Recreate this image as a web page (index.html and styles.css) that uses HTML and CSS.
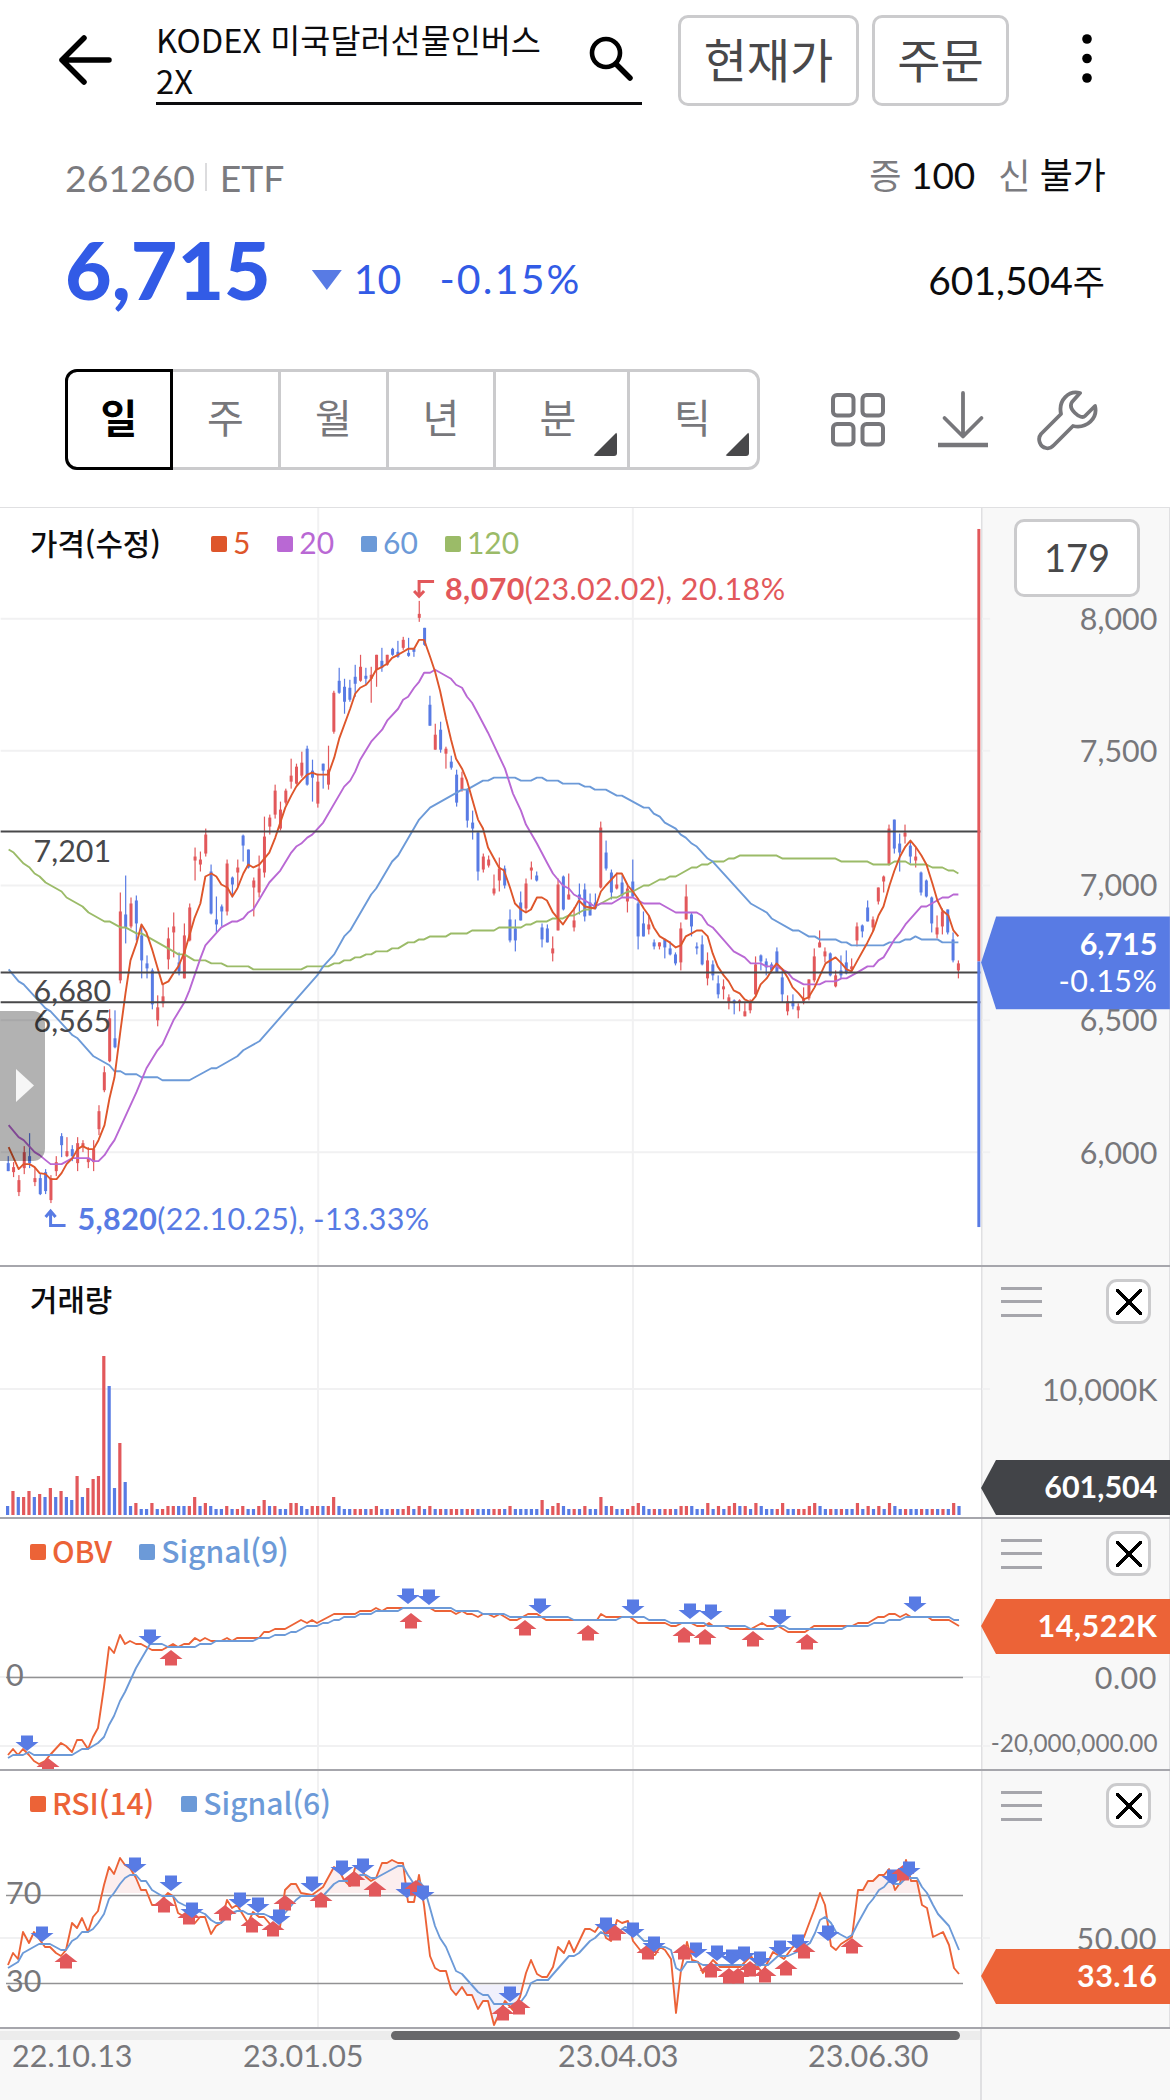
FILE: index.html
```
<!DOCTYPE html>
<html lang="ko">
<head>
    <meta charset="UTF-8">
    <meta name="viewport" content="width=device-width, initial-scale=1.0">
    <title>KODEX 미국달러선물인버스2X</title>
    <link rel="stylesheet" href="styles.css">
</head>
<body>
    <header class="top-bar">
        <svg class="back-icon" width="54" height="54" viewBox="0 0 54 54">
            <path d="M51 27H4M26 5L4 27l22 22" fill="none" stroke="#000" stroke-width="5.5" stroke-linecap="round" stroke-linejoin="round"/>
        </svg>
        <div class="search-box">
            <span class="search-text">KODEX 미국달러선물인버스<br>2X</span>
            <svg class="search-icon" width="48" height="48" viewBox="0 0 48 48">
                <circle cx="19" cy="18" r="14" fill="none" stroke="#000" stroke-width="4.6"/>
                <path d="M29 29L43 43" stroke="#000" stroke-width="5.5" stroke-linecap="round"/>
            </svg>
        </div>
        <button class="top-btn wide">현재가</button>
        <button class="top-btn">주문</button>
        <svg class="more-icon" width="12" height="52" viewBox="0 0 12 52">
            <circle cx="6" cy="6" r="4.8"/>
            <circle cx="6" cy="25.5" r="4.8"/>
            <circle cx="6" cy="45" r="4.8"/>
        </svg>
    </header>

    <section class="info-row">
        <span class="code">261260</span>
        <span class="divider"></span>
        <span class="code">ETF</span>
        <span class="margin-info"><em>증</em> 100</span>
        <span class="margin-info second"><em>신</em> 불가</span>
    </section>

    <section class="price-row">
        <strong class="price">6,715</strong>
        <span class="down-mark"></span>
        <span class="diff">10</span>
        <span class="rate">-0.15%</span>
        <span class="shares">601,504<em>주</em></span>
    </section>

    <section class="period-row">
        <ul class="tabs">
            <li class="active">일</li>
            <li>주</li>
            <li>월</li>
            <li class="year">년</li>
            <li class="more">분</li>
            <li class="more">틱</li>
        </ul>
        <div class="tools">
            <svg width="56" height="56" viewBox="0 0 56 56">
                <g fill="none" stroke="#77777b" stroke-width="4">
                    <rect x="3" y="3" width="20.5" height="20.5" rx="4"/>
                    <rect x="32.5" y="3" width="20.5" height="20.5" rx="4"/>
                    <rect x="3" y="32" width="20.5" height="20.5" rx="4"/>
                    <rect x="32.5" y="32" width="20.5" height="20.5" rx="4"/>
                </g>
            </svg>
            <svg width="52" height="58" viewBox="0 0 52 58">
                <path d="M26 2V45M7.500 27L26 45.500L44.500 27" fill="none" stroke="#77777b" stroke-width="3.800" stroke-linecap="round" stroke-linejoin="round"/>
                <path d="M1 54H51" stroke="#77777b" stroke-width="4.500"/>
            </svg>
            <svg width="62" height="62" viewBox="0 0 62 62">
                <path d="M43 4C32 1 21 11 24 25L4 45C0 50 3 58 9 59C12 60 14 59 17 56L36 37C50 40 61 29 58 17L48 27C46 29 42 28 38 24C34 20 33 16 35 13Z" fill="none" stroke="#77777b" stroke-width="3.800" stroke-linejoin="round"/>
            </svg>
        </div>
    </section>

    <main class="chart">
        <section class="panel price-panel">
            <svg class="plot" viewBox="0 507 981 758">
                <path class="grid" d="M318 507V1265M633 507V1265M0 618H981M0 750H981M0 885H981M0 1020H981M0 1152H981"/>
                <g id="candles"></g>
                <polyline class="line ma120" points="8,849 13,852 23,863 29,867 34,873 39,876 45,882 61,891 66,897 82,906 88,912 104,921 109,921 120,927 125,927 136,933 141,933 173,951 178,954 184,954 194,960 205,960 211,963 221,963 227,966 248,966 253,969 301,969 307,966 328,966 334,963 339,963 344,960 350,960 355,957 360,957 366,954 371,954 376,951 387,951 392,948 398,948 408,942 414,942 419,939 424,939 430,936 446,936 451,933 467,933 472,930 494,930 499,927 521,927 526,924 531,924 537,921 547,921 553,918 563,918 569,915 574,915 585,909 590,909 612,897 617,897 628,891 633,891 644,885 649,885 660,879 665,879 670,876 676,876 692,867 697,867 702,864 708,864 713,861 724,861 729,858 734,858 740,855 777,855 783,858 836,858 842,861 868,861 874,864 890,864 895,861 906,861 911,864 927,864 933,867 943,867 949,870 954,870 959,873"/>
                <polyline class="line ma60" points="8,969 18,981 23,984 45,1008 50,1011 72,1035 77,1038 93,1056 109,1065 114,1071 120,1071 125,1074 136,1074 141,1077 157,1077 162,1080 189,1080 211,1068 216,1068 237,1056 243,1050 259,1041 317,975 323,966 334,954 344,936 350,930 371,894 376,888 392,861 398,855 419,819 430,807 462,789 467,789 483,780 488,780 494,777 515,777 521,780 531,780 537,777 542,777 547,780 558,780 563,783 579,783 585,786 590,786 595,789 606,789 617,795 622,795 644,807 649,807 654,813 660,816 665,822 676,828 681,834 686,837 692,843 697,846 708,858 713,861 751,903 767,912 772,918 793,930 799,930 809,936 815,936 820,939 836,939 842,942 847,942 852,945 884,945 890,942 900,942 906,939 911,939 916,936 922,939 938,939 943,942 959,942"/>
                <polyline class="line ma20" points="8,1125 18,1137 23,1140 34,1152 39,1155 45,1160 50,1164 61,1164 72,1158 88,1158 93,1161 98,1161 104,1155 109,1147 114,1140 125,1116 136,1092 146,1068 157,1050 162,1044 173,1020 184,1002 189,990 200,958 205,945 221,927 232,921 237,921 243,918 248,912 253,909 269,882 280,870 291,852 296,846 301,843 307,837 312,834 323,822 344,786 350,780 355,771 360,759 371,741 382,729 387,720 398,708 403,699 408,696 414,687 419,681 424,672 430,672 435,669 451,678 456,684 462,687 467,696 472,702 478,713 488,732 505,768 513,793 521,810 526,824 537,843 547,862 553,873 563,885 569,888 574,894 585,900 595,906 601,903 612,903 622,897 633,897 644,903 660,903 676,912 697,912 702,915 708,924 713,927 734,951 745,957 751,963 761,963 767,966 777,966 788,972 793,978 804,984 820,984 826,981 836,981 842,978 847,978 858,972 868,966 874,966 879,960 884,957 895,939 900,933 906,924 922,906 927,906 943,897 949,897 954,894 959,894"/>
                <polyline class="line ma5" points="8,1147 18,1169 23,1164 29,1164 34,1167 39,1173 45,1174 50,1179 56,1179 61,1173 66,1164 72,1158 77,1149 82,1146 88,1149 93,1149 98,1140 104,1125 109,1098 114,1077 120,1030 125,993 130,960 136,943 141,924 146,932 152,950 157,967 162,984 168,981 173,973 178,966 184,952 189,935 194,918 200,903 205,876 211,873 216,876 221,884 227,887 232,896 237,888 243,873 248,864 253,867 259,864 264,858 269,852 275,837 280,822 285,807 291,795 296,786 301,780 307,774 312,772 317,774 328,774 334,757 339,738 350,708 355,693 360,687 366,684 371,678 376,669 382,666 387,663 392,657 398,654 408,648 414,648 419,639 424,639 430,656 435,671 440,690 446,718 451,739 456,758 462,768 467,780 472,798 478,819 483,828 488,847 494,858 499,867 504,870 510,887 515,903 521,909 526,912 531,909 537,897 542,897 547,900 553,912 558,918 563,924 569,915 574,909 579,900 585,906 595,908 601,891 606,885 617,873 622,873 628,885 633,891 638,898 644,908 649,915 654,927 660,936 670,942 676,947 681,945 686,936 692,933 697,930 702,930 708,936 713,953 718,966 724,975 729,981 734,990 740,993 745,999 751,1002 756,996 761,984 767,978 772,970 777,963 783,969 788,977 793,987 799,993 804,999 809,997 815,987 826,963 831,960 836,957 842,963 847,969 852,971 858,960 868,942 874,930 879,915 884,906 890,885 895,870 900,857 906,846 911,840 916,846 922,855 927,864 933,883 938,900 943,910 949,915 954,930 959,936"/>
                <path class="level" d="M0 831H981M0 972H981M0 1002H981"/>
                <text class="level-label" x="33" y="861">7,201</text>
                <text class="level-label" x="33" y="1002">6,680</text>
                <text class="level-label" x="33" y="1032">6,565</text>
                <path class="peak-arrow" d="M434 580.500H419V595M414 590L419 595.500L424 590"/>
                <text class="peak" x="445" y="599"><tspan class="bold">8,070</tspan>(23.02.02), 20.18%</text>
                <path class="low-arrow" d="M65 1225.500H50V1211M45 1217L50 1211L55 1217"/>
                <text class="low" x="77" y="1230"><tspan class="bold">5,820</tspan>(22.10.25), -13.33%</text>
                <rect x="978" y="528" width="3" height="433" fill="#e2585b"/>
                <rect x="978" y="961" width="3" height="266" fill="#587be4"/>
            </svg>
            <svg class="axis" viewBox="981 507 189 758">
                <path class="grid" d="M982 618H990M982 750H990M982 885H990M982 1020H990M982 1152H990"/>
                <text x="1157.500" y="629">8,000</text>
                <text x="1157.500" y="761">7,500</text>
                <text x="1157.500" y="896">7,000</text>
                <text x="1157.500" y="1031">6,500</text>
                <text x="1157.500" y="1164">6,000</text>
                <path d="M981 962L996 916H1170V1009H996Z" fill="#587be4"/>
                <text class="tag bold" x="1157.500" y="955">6,715</text>
                <text class="tag wide" x="1157.500" y="992">-0.15%</text>
            </svg>
            <div class="legend">
                <b>가격(수정)</b>
                <span class="key ma5">5</span>
                <span class="key ma20">20</span>
                <span class="key ma60">60</span>
                <span class="key ma120">120</span>
            </div>
            <span class="count">179</span>
            <span class="drawer"></span>
        </section>

        <section class="panel">
            <svg class="plot" viewBox="0 1267 981 250">
                <path class="grid" d="M318 1267V1517M633 1267V1517M0 1389H981"/>
                <g id="volume"></g>
            </svg>
            <svg class="axis" viewBox="981 1267 189 250">
                <path class="grid" d="M982 1389H990"/>
                <text x="1157.500" y="1401">10,000K</text>
                <path d="M981 1488L996 1460H1170V1515H996Z" fill="#424448"/>
                <text class="tag bold" x="1157.500" y="1498">601,504</text>
            </svg>
            <div class="legend"><b>거래량</b></div>
            <div class="controls"><i class="menu"></i><i class="close"></i></div>
        </section>

        <section class="panel">
            <svg class="plot" viewBox="0 1519 981 250">
                <path class="grid" d="M318 1519V1769M633 1519V1769M0 1677H981M0 1746H981"/>
                <path class="base" d="M6 1677.500H963"/>
                <text class="base-label" x="6" y="1686">0</text>
                <polyline class="line osc" points="8,1755 13,1749 18,1755 23,1749 29,1755 34,1761 39,1764 45,1761 50,1755 61,1743 66,1746 72,1752 77,1740 82,1740 88,1749 93,1737 98,1728 104,1687 109,1647 114,1653 120,1635 125,1644 130,1641 136,1644 141,1644 152,1650 162,1650 173,1644 178,1647 184,1644 189,1644 195,1638 200,1641 205,1638 211,1641 221,1641 227,1638 232,1641 237,1638 259,1638 264,1632 269,1632 275,1629 285,1629 301,1620 307,1623 312,1620 317,1623 334,1614 355,1614 360,1611 371,1611 376,1608 382,1611 387,1608 430,1608 435,1611 451,1611 456,1614 462,1611 467,1614 472,1614 478,1617 483,1614 488,1614 494,1617 500,1614 510,1620 517,1620 528,1614 537,1614 546,1620 597,1620 601,1614 606,1617 630,1617 638,1623 665,1623 671,1626 676,1626 682,1623 691,1623 697,1626 704,1626 709,1623 713,1626 724,1626 730,1629 751,1629 762,1623 767,1626 778,1626 788,1632 805,1632 814,1626 852,1626 858,1623 868,1623 878,1617 884,1617 889,1614 895,1614 900,1617 906,1614 911,1617 928,1617 932,1620 949,1620 959,1626"/>
                <polyline class="line signal" points="8,1758 13,1755 23,1755 29,1752 34,1755 72,1755 82,1749 88,1749 98,1743 104,1737 109,1725 114,1716 120,1701 125,1692 136,1668 150,1644 162,1644 168,1647 195,1647 200,1644 211,1644 216,1641 253,1641 259,1638 269,1638 275,1635 285,1635 291,1632 296,1632 307,1626 317,1626 323,1623 328,1623 334,1620 339,1620 344,1617 355,1617 360,1614 371,1614 376,1611 398,1611 403,1608 451,1608 456,1611 478,1611 483,1614 504,1614 510,1617 568,1617 574,1620 616,1620 622,1617 644,1617 649,1620 665,1620 671,1623 704,1623 708,1626 745,1626 751,1629 773,1629 778,1626 784,1626 789,1629 842,1629 847,1626 868,1626 874,1623 884,1623 889,1620 900,1620 906,1617 949,1617 954,1620 959,1620"/>
                <g id="obvMarks"></g>
            </svg>
            <svg class="axis" viewBox="981 1519 189 250">
                <path class="grid" d="M982 1677H990M982 1746H990"/>
                <text class="wide" x="1157" y="1689">0.00</text>
                <text class="small" x="1157.500" y="1752">-20,000,000.00</text>
                <path d="M981 1626L996 1599H1170V1654H996Z" fill="#ec6337"/>
                <text class="tag bold wide" x="1157.500" y="1637">14,522K</text>
            </svg>
            <div class="legend indicator">
                <span class="key osc">OBV</span>
                <span class="key signal">Signal(9)</span>
            </div>
            <div class="controls"><i class="menu"></i><i class="close"></i></div>
        </section>

        <section class="panel rsi-panel">
            <svg class="plot" viewBox="0 1771 981 256">
                <defs>
                    <clipPath id="over"><rect x="0" y="1771" width="980" height="122"/></clipPath>
                    <clipPath id="under"><rect x="0" y="1985" width="980" height="42"/></clipPath>
                </defs>
                <path class="grid" d="M318 1771V2027M633 1771V2027M0 1938H981"/>
                <path id="overArea" clip-path="url(#over)" fill="#fceeee"/>
                <path id="underArea" clip-path="url(#under)" fill="#f0f0fc"/>
                <path class="base" d="M6 1895.500H963M6 1983.500H963"/>
                <text class="base-label" x="6" y="1904">70</text>
                <text class="base-label" x="6" y="1992">30</text>
                <polyline id="rsiLine" class="line osc" points="8,1965 13,1953 18,1959 23,1932 29,1943 34,1932 45,1947 50,1947 56,1953 61,1956 66,1950 72,1923 77,1928 82,1918 88,1932 93,1917 98,1911 104,1885 109,1867 114,1874 120,1858 125,1865 130,1868 136,1878 141,1890 146,1890 152,1905 157,1905 168,1893 173,1896 178,1913 195,1923 200,1917 205,1917 211,1934 216,1926 221,1923 227,1900 232,1908 237,1905 248,1923 253,1912 259,1917 264,1917 275,1930 280,1927 285,1890 291,1884 296,1884 301,1893 312,1895 323,1887 334,1867 339,1870 344,1880 350,1886 355,1868 360,1867 366,1877 371,1881 376,1878 382,1863 387,1863 392,1860 398,1863 403,1863 408,1902 414,1902 419,1875 424,1905 430,1956 435,1968 440,1971 446,1971 451,1989 456,1995 462,1987 467,1995 472,1995 478,2009 483,2001 488,2001 494,2025 499,2014 505,2001 513,2010 520,1997 526,1973 531,1960 537,1974 542,1977 547,1977 553,1967 558,1947 564,1953 569,1941 574,1952 585,1929 590,1929 595,1932 601,1923 606,1938 611,1941 617,1920 622,1923 628,1921 633,1941 644,1955 655,1955 660,1947 665,1950 671,1959 676,2013 681,1970 687,1942 692,1960 698,1962 703,1973 713,1960 720,1967 740,1967 751,1956 762,1973 773,1952 784,1959 792,1948 804,1937 810,1921 815,1908 820,1893 825,1905 831,1946 836,1950 841,1944 852,1937 858,1890 863,1890 868,1881 873,1881 879,1875 884,1875 889,1869 895,1890 900,1883 906,1860 911,1881 917,1881 922,1905 927,1908 933,1937 943,1932 949,1945 954,1968 959,1974"/>
                <polyline class="line signal" points="8,1968 18,1962 23,1953 39,1944 50,1944 61,1950 66,1950 72,1941 77,1938 82,1932 88,1932 93,1929 98,1923 104,1914 109,1899 114,1893 120,1884 125,1878 130,1875 136,1875 141,1881 146,1881 152,1890 162,1896 173,1896 178,1902 184,1905 205,1914 211,1920 216,1923 221,1923 232,1913 237,1911 243,1911 248,1914 264,1914 275,1919 285,1913 296,1900 301,1896 323,1896 334,1884 339,1881 350,1881 360,1875 366,1875 371,1878 376,1878 398,1866 403,1866 408,1875 414,1884 419,1881 424,1887 430,1908 435,1926 440,1938 446,1947 456,1971 462,1974 478,1992 483,1995 488,1995 494,2004 511,2004 520,2003 526,1995 531,1983 537,1980 548,1980 569,1956 574,1956 579,1953 590,1941 595,1938 601,1932 606,1935 611,1937 625,1927 633,1930 644,1941 649,1941 655,1947 665,1947 671,1950 676,1968 681,1971 687,1962 697,1962 703,1965 768,1965 778,1956 788,1956 797,1952 810,1943 815,1933 820,1920 825,1917 831,1923 836,1932 847,1938 852,1935 858,1923 868,1905 873,1899 879,1890 884,1887 889,1881 895,1884 900,1884 906,1878 917,1878 922,1887 927,1893 933,1905 938,1914 949,1926 959,1950"/>
                <g id="rsiMarks"></g>
            </svg>
            <svg class="axis" viewBox="981 1771 189 256">
                <path class="grid" d="M982 1938H990"/>
                <text class="wide" x="1157" y="1950">50.00</text>
                <path d="M981 1976L996 1949H1170V2004H996Z" fill="#ec6337"/>
                <text class="tag bold wide" x="1157.500" y="1987">33.16</text>
            </svg>
            <div class="legend indicator">
                <span class="key osc">RSI(14)</span>
                <span class="key signal">Signal(6)</span>
            </div>
            <div class="controls"><i class="menu"></i><i class="close"></i></div>
        </section>

        <footer class="dates">
            <div class="scroll-track"><div class="scroll-thumb"></div></div>
            <div class="date-list">
                <span>22.10.13</span>
                <span>23.01.05</span>
                <span>23.04.03</span>
                <span>23.06.30</span>
            </div>
        </footer>
    </main>

    <script src="chart.js"></script>
</body>
</html>
```
FILE: styles.css
```
* {
    margin: 0;
    padding: 0;
    box-sizing: border-box;
}

body {
    width: 1170px;
    height: 2100px;
    overflow: hidden;
    background-color: #fff;
    color: #0c0c0e;
    font-family: Lato, 'Noto Sans CJK KR', sans-serif;
}

em, i {
    font-style: normal;
}

/* 상단 */
.top-bar {
    display: flex;
    align-items: flex-start;
    height: 120px;
    padding: 15px 0 0 58px;
}

.back-icon {
    margin-top: 18px;
}

.search-box {
    display: flex;
    justify-content: space-between;
    width: 486px;
    height: 90px;
    margin-left: 44px;
    padding-top: 3px;
    border-bottom: 3px solid #0c0c0e;
}

.search-text {
    font-family: 'Noto Sans CJK KR', sans-serif;
    font-size: 32.7px;
    line-height: 41px;
    white-space: nowrap;
}

.search-icon {
    margin: 17px 7px 0 0;
}

.top-btn {
    width: 137px;
    height: 91px;
    margin-left: 13px;
    padding-bottom: 5px;
    border: 3px solid #cbcbcd;
    border-radius: 10px;
    background-color: #fff;
    color: #48484a;
    font-family: 'Noto Sans CJK KR', sans-serif;
    font-size: 47px;
    line-height: 78px;
}

.top-btn.wide {
    width: 181px;
    margin-left: 36px;
}

.more-icon {
    margin: 18px 0 0 72px;
}

/* 종목 정보 */
.info-row {
    display: flex;
    align-items: center;
    height: 110px;
    padding: 0 64px 0 65px;
    font-size: 37.3px;
}

.code {
    padding-top: 4px;
    color: #7b7b7f;
}

.divider {
    width: 2px;
    height: 28px;
    margin: 4px 13px 0 10px;
    background-color: #dcdcde;
}

.margin-info {
    margin-left: auto;
    padding-bottom: 4px;
    font-size: 37px;
}

.margin-info em {
    color: #7b7b7f;
    font-size: 35px;
}

.margin-info.second {
    margin-left: 23px;
    font-size: 36px;
}

.price-row {
    display: flex;
    align-items: flex-start;
    height: 139px;
    padding: 0 65px 0 65px;
    color: #325be6;
    font-size: 41px;
    line-height: 98px;
}

.price {
    font-size: 80.5px;
    font-weight: 900;
    line-height: 78px;
}

.down-mark {
    width: 30px;
    height: 20px;
    margin: 40px 12px 0 41px;
    background-color: #587be4;
    clip-path: polygon(0 0, 100% 0, 50% 100%);
}

.rate {
    margin-left: 38px;
    letter-spacing: 2.2px;
}

.shares {
    margin-left: auto;
    color: #0c0c0e;
    font-size: 39px;
    line-height: 101px;
}

.shares em {
    font-size: 35px;
}

/* 주기 탭 */
.period-row {
    display: flex;
    height: 138px;
    padding-left: 65px;
}

.tabs {
    display: flex;
    width: 695px;
    height: 101px;
    border: 3px solid #cbcbcd;
    border-radius: 12px;
    list-style: none;
    color: #77777b;
    font-size: 40px;
    line-height: 92px;
    text-align: center;
}

.tabs li {
    position: relative;
    flex: 0 0 108px;
    border-right: 3px solid #cbcbcd;
}

.tabs .active {
    height: 101px;
    margin: -3px 0 0 -3px;
    border: 3px solid #000;
    border-radius: 12px 0 0 12px;
    color: #000;
    font-weight: 700;
}

.tabs .year {
    flex-basis: 107px;
}

.tabs .more {
    flex-basis: 134px;
    padding-right: 7px;
}

.tabs .more:last-child {
    flex-basis: 127px;
    padding-right: 2px;
    border-right: none;
}

.tabs .more::after {
    content: '';
    position: absolute;
    right: 10px;
    bottom: 11px;
    width: 24px;
    height: 24px;
    border-radius: 3px;
    background-color: #48484a;
    clip-path: polygon(100% 0, 100% 100%, 0 100%);
}

.tabs .more:last-child::after {
    right: 8px;
}

.tools {
    display: flex;
    align-items: center;
    gap: 51px;
    height: 101px;
    margin-left: 70px;
}

.tools svg:last-child {
    margin-left: -3px;
}

/* 차트 */
.chart {
    background-color: #f8f8f8;
}

.panel {
    position: relative;
    display: flex;
    height: 252px;
    border-bottom: 2px solid #a6a6ac;
}

.price-panel {
    height: 760px;
}

.rsi-panel {
    height: 258px;
}

.plot {
    width: 981px;
    background-color: #fff;
}

.axis {
    width: 189px;
    box-shadow: inset 1.5px 0 #e0e0e2, inset -1px 0 #e0e0e2;
}

.price-panel .plot,
.price-panel .axis {
    border-top: 1px solid #e0e0e2;
}

.grid {
    fill: none;
    stroke: #f1f1f2;
    stroke-width: 2;
}

.line {
    fill: none;
    stroke: currentColor;
    stroke-width: 1.9;
    stroke-linejoin: round;
}

.ma5 { color: #de562b; }
.ma20 { color: #b968d4; }
.ma60, .signal { color: #6c9ad8; }
.ma120 { color: #9bbb68; }
.osc { color: #ec6337; }

.level {
    stroke: #48484a;
    stroke-width: 2;
}

.base {
    stroke: #929294;
    stroke-width: 1.5;
}

svg text {
    font-size: 30.5px;
}

.level-label { fill: #48484a; }
.base-label { fill: #77777b; }
.peak { fill: #e2585b; }
.low { fill: #587be4; }

.peak, .low {
    letter-spacing: 0.4px;
}

.bold {
    font-weight: 700;
}

.peak-arrow, .low-arrow {
    fill: none;
    stroke: #e2585b;
    stroke-width: 3;
}

.low-arrow {
    stroke: #587be4;
}

.axis text {
    fill: #77777b;
    text-anchor: end;
}

.axis .small {
    font-size: 24.3px;
}

.axis .wide {
    letter-spacing: 0.5px;
}

.axis .tag {
    fill: #fff;
}

.up {
    fill: #e2585b;
}

.down {
    fill: #587be4;
}

.legend {
    position: absolute;
    left: 30px;
    top: 11px;
    display: flex;
    gap: 27px;
    font-size: 30px;
    line-height: 40px;
}

.price-panel .legend {
    top: 15px;
}

.legend b {
    margin-right: 23px;
    font-family: 'Noto Sans CJK KR', sans-serif;
    font-weight: 500;
    font-size: 29.8px;
}

.key {
    display: flex;
    align-items: center;
    gap: 6px;
}

.key::before {
    content: '';
    width: 16px;
    height: 16px;
    margin-top: 4px;
    border-radius: 2px;
    background-color: currentColor;
}

.indicator {
    font-family: 'Noto Sans CJK KR', sans-serif;
    font-weight: 500;
}

.count {
    position: absolute;
    left: 1014px;
    top: 12px;
    width: 126px;
    height: 78px;
    border: 3px solid #cbcbcd;
    border-radius: 10px;
    background-color: #fff;
    color: #48484a;
    font-size: 38px;
    line-height: 70px;
    text-align: center;
}

.drawer {
    position: absolute;
    left: 0;
    top: 504px;
    width: 45px;
    height: 150px;
    border-radius: 0 12px 12px 0;
    background-color: rgba(0, 0, 0, 0.3);
}

.drawer::after {
    content: '';
    position: absolute;
    left: 16px;
    top: 58px;
    width: 18px;
    height: 33px;
    background-color: #f6f6f6;
    clip-path: polygon(0 0, 100% 50%, 0 100%);
}

.controls {
    position: absolute;
    right: 19px;
    top: 12px;
    display: flex;
    align-items: center;
    gap: 64px;
}

.menu {
    width: 41px;
    height: 30px;
    border-top: 3px solid #a6a6ac;
    border-bottom: 3px solid #a6a6ac;
    background: linear-gradient(#a6a6ac, #a6a6ac) center / 100% 3px no-repeat;
}

.close {
    width: 45px;
    height: 45px;
    border: 3px solid #cbcbcd;
    border-radius: 11px;
    background:
        linear-gradient(45deg, transparent 45.5%, #000 45.5%, #000 54.5%, transparent 54.5%) center / 26px 26px no-repeat,
        linear-gradient(-45deg, transparent 45.5%, #000 45.5%, #000 54.5%, transparent 54.5%) center / 26px 26px no-repeat,
        #fff;
}

/* 날짜축 */
.dates {
    width: 982px;
    height: 71px;
    padding-top: 2px;
    border-right: 2px solid #e0e0e2;
}

.scroll-track {
    height: 9px;
    padding-left: 391px;
    background-color: #ececec;
}

.scroll-thumb {
    width: 569px;
    height: 9px;
    border-radius: 5px;
    background-color: #68686a;
}

.date-list {
    display: grid;
    grid-template-columns: 231px 315px 250px 1fr;
    padding-left: 12px;
    color: #77777b;
    font-size: 30.5px;
    line-height: 31px;
}
```
FILE: chart.js
```
// 봉 데이터: 방향, 고가, 몸통 위, 몸통 아래, 저가 (화면 y좌표)
const candles = `
b1156,1163,1171,1171 r1162,1167,1172,1177 r1175,1180,1192,1196 r1146,1152,1168,1174 b1133,1156,1163,1168
r1167,1178,1182,1186 b1173,1178,1194,1195 b1169,1172,1191,1194 r1175,1178,1200,1203 r1156,1162,1171,1176
b1133,1136,1145,1157 r1137,1151,1156,1157 b1145,1149,1156,1161 r1137,1143,1163,1171 r1140,1143,1147,1152
r1147,1158,1162,1168 r1140,1149,1162,1171 r1105,1111,1129,1135 r1066,1072,1090,1092 r1009,1018,1061,1062
b1010,1038,1047,1048 r892,911,980,983 b875,914,927,943 r897,903,926,928 b895,900,923,940
b924,935,960,978 b955,963,968,978 b968,970,1004,1009 r995,1007,1020,1026 r984,996,1003,1007
r927,938,959,969 r912,926,932,957 b952,962,971,975 r923,935,978,978 r903,907,940,941
r847,856,860,880 r851,859,864,871 r828,834,853,856 b864,871,913,914 b896,919,924,932
b904,906,911,926 r859,863,911,915 b876,877,884,897 r859,867,872,887 b834,835,845,861
b849,849,867,868 r877,880,887,916 r855,868,892,897 r816,836,872,877 r814,817,826,834
r784,790,814,818 r801,809,828,830 r788,790,802,804 r758,775,781,788 r763,766,783,784
r751,762,775,777 b745,748,784,785 b759,770,777,801 r773,781,803,807 b763,763,770,788
r745,769,784,789 r690,692,731,733 b667,680,692,693 b678,686,701,713 b679,687,699,701
b664,676,683,696 r654,666,680,681 b667,675,678,684 r666,674,678,702 r654,654,669,686
b647,660,667,671 r654,654,664,665 b647,648,654,655 b640,651,656,657 r636,639,647,649
b637,652,655,656 b647,648,651,656 r600,613,617,621 b627,627,644,645 b695,704,725,725
r723,734,749,749 b721,729,749,752 r746,748,753,768 b755,761,767,769 b769,774,802,806
r771,777,789,791 b788,789,820,827 b810,822,828,839 b831,832,871,880 r853,856,869,872
r855,859,865,867 r874,888,893,895 r857,868,880,891 b865,868,885,888 b909,919,940,942
b919,928,940,951 b891,902,920,920 r878,883,908,911 r861,867,870,879 b871,875,880,881
b923,927,939,947 b924,928,942,942 r936,948,953,961 r878,884,930,930 b875,876,909,910
r873,894,899,899 r907,920,927,931 b883,894,899,914 b883,889,916,921 b893,902,915,915
b893,902,908,909 r821,827,887,888 b840,852,868,870 b869,872,892,899 r872,884,888,889
b875,882,895,897 r885,888,901,912 b859,881,896,897 b901,903,936,949 b911,923,936,936
r915,924,929,934 b939,942,946,949 r942,942,946,949 b938,939,947,958 b941,948,954,955
b952,954,963,965 r922,928,962,970 r884,896,919,919 b912,914,926,936 b942,946,948,954
b935,944,964,965 r952,960,978,985 b960,964,975,980 b975,983,994,998 r979,986,989,999
r994,997,1002,1009 b999,1000,1003,1014 r999,1000,1002,1011 r1002,1011,1016,1016 r999,1001,1010,1013
r956,964,994,995 b954,955,961,970 b958,961,967,975 b962,964,970,973 b947,951,972,972
b968,977,994,1002 r995,1001,1011,1015 b994,1001,1006,1009 r1003,1006,1010,1018 r987,998,1001,1004
r979,979,998,1000 r948,956,980,982 r930,942,947,947 r947,951,956,962 b952,953,975,976
r970,975,986,987 b955,970,975,978 b950,962,973,974 r958,966,969,971 r922,926,940,946
b924,925,931,937 b900,907,921,921 r916,919,927,931 r887,887,901,904 r875,876,881,892
r824,828,864,865 b819,819,848,853 b833,843,852,871 r824,832,836,843 b841,845,856,863
r847,856,860,867 b871,872,892,895 b879,880,896,897 b896,897,923,932 r915,927,934,938
r908,911,926,934 b909,909,932,934 b932,939,960,962 r960,963,970,978`;

// 거래량: 방향 + 막대 높이
const volumes = `
b9 r24 b18 r18 r24 b18 r21 b18 r27 b18 r24 b18 b15 r39 b18 r27 r36 r39 r159 b129
b27 r72 b33 b9 r12 b6 b6 r12 b6 r6 r9 r9 b9 b9 r9 r18 b9 r12 b9 b6
b6 r9 b6 r6 r9 b6 b6 r9 r15 b9 r9 b6 b6 r12 r12 b9 b6 r9 r9 b9
r9 r18 b9 b6 b6 r6 r6 b6 r6 r9 b6 b6 r6 b6 r6 r9 b6 r9 b6 r9
b6 r6 b6 r6 r6 b6 r6 r6 b6 b6 b6 r6 r6 b6 r9 b6 b6 b6 b6 b6
r15 b6 r9 r12 b9 b6 r6 b6 r9 b6 b6 r18 b9 r9 b6 b6 r6 r9 r12 b9
b6 r6 b6 r6 r6 b6 r9 r9 b9 b6 b6 r12 b6 r9 b6 r9 r12 b9 r9 b6
r12 b9 b6 b6 r6 r12 b6 b6 r6 r6 r9 r12 b9 b6 r6 b6 r6 b6 b6 r12
b6 r9 b6 r9 b6 r12 b9 b6 r6 b6 b6 r6 b6 r6 b6 r6 b6 r12 b9`;

// 매매 신호 화살표 (끝점 x,y)
const obvMarks = {
    down: [[27,1751],[150,1645],[408,1604],[429,1605],[540,1614],[633,1615],[690,1619],[711,1620],[780,1625],[915,1612]],
    up: [[48,1758],[171,1650],[411,1613],[525,1620],[588,1625],[684,1627],[705,1629],[753,1631],[807,1634]]
};
const rsiMarks = {
    down: [[42,1942],[135,1873],[171,1891],[240,1908],[258,1913],[312,1892],[342,1876],[363,1874],[407,1898],
        [510,2002],[606,1933],[633,1938],[696,1958],[717,1961],[732,1965],[744,1962],[760,1967],[780,1956],[798,1950],[828,1941],[893,1885]],
    up: [[66,1953],[164,1897],[189,1909],[225,1905],[252,1917],[273,1921],[285,1895],[321,1892],[354,1871],[375,1881],[416,1880],
        [503,2005],[519,1999],[615,1925],[648,1944],[684,1944],[711,1962],[729,1968],[738,1968],[750,1961],[765,1967],[786,1960],[804,1943],[852,1938],[903,1865]]
};
// 매수 신호보다 위에 그려지는 매도 신호
const rsiTopMarks = {
    down: [[192,1918],[279,1925],[423,1901],[654,1952],[909,1877]],
    up: []
};

const STEP = 5.345;
const colors = { r: 'up', b: 'down' };

function centerX(i) {
    return 7.6 + i * STEP;
}

function drawCandles() {
    let html = '';
    candles.trim().split(/\s+/).forEach((item, i) => {
        const x = centerX(i);
        const [high, top, bottom, low] = item.slice(1).split(',').map(Number);
        html += `<g class="${colors[item[0]]}">
            <rect x="${x - 0.6}" y="${high}" width="1.2" height="${low - high}"/>
            <rect x="${x - 1.5}" y="${top}" width="3" height="${bottom - top}"/>
        </g>`;
    });
    document.getElementById('candles').innerHTML = html;
}

function drawVolume() {
    let html = '';
    volumes.trim().split(/\s+/).forEach((item, i) => {
        const h = Number(item.slice(1));
        html += `<rect class="${colors[item[0]]}" x="${centerX(i) - 1.6}" y="${1515 - h}" width="3.2" height="${h}"/>`;
    });
    document.getElementById('volume').innerHTML = html;
}

function drawMarks(id, marks) {
    let html = '';
    marks.down.forEach(([x, y]) => {
        html += `<path class="down" d="M${x} ${y}l-11.5 -9h5.5v-6.5h12v6.5h5.5z"/>`;
    });
    marks.up.forEach(([x, y]) => {
        html += `<path class="up" d="M${x} ${y}l11.5 9h-5.5v6.5h-12v-6.5h-5.5z"/>`;
    });
    document.getElementById(id).insertAdjacentHTML('beforeend', html);
}

// RSI 과열/침체 구간 채우기
function drawAreas() {
    const points = document.getElementById('rsiLine').getAttribute('points');
    document.getElementById('overArea').setAttribute('d', `M8,2027L${points}L959,2027Z`);
    document.getElementById('underArea').setAttribute('d', `M8,1771L${points}L959,1771Z`);
}

drawCandles();
drawVolume();
drawMarks('obvMarks', obvMarks);
drawMarks('rsiMarks', rsiMarks);
drawMarks('rsiMarks', rsiTopMarks);
drawAreas();
```
